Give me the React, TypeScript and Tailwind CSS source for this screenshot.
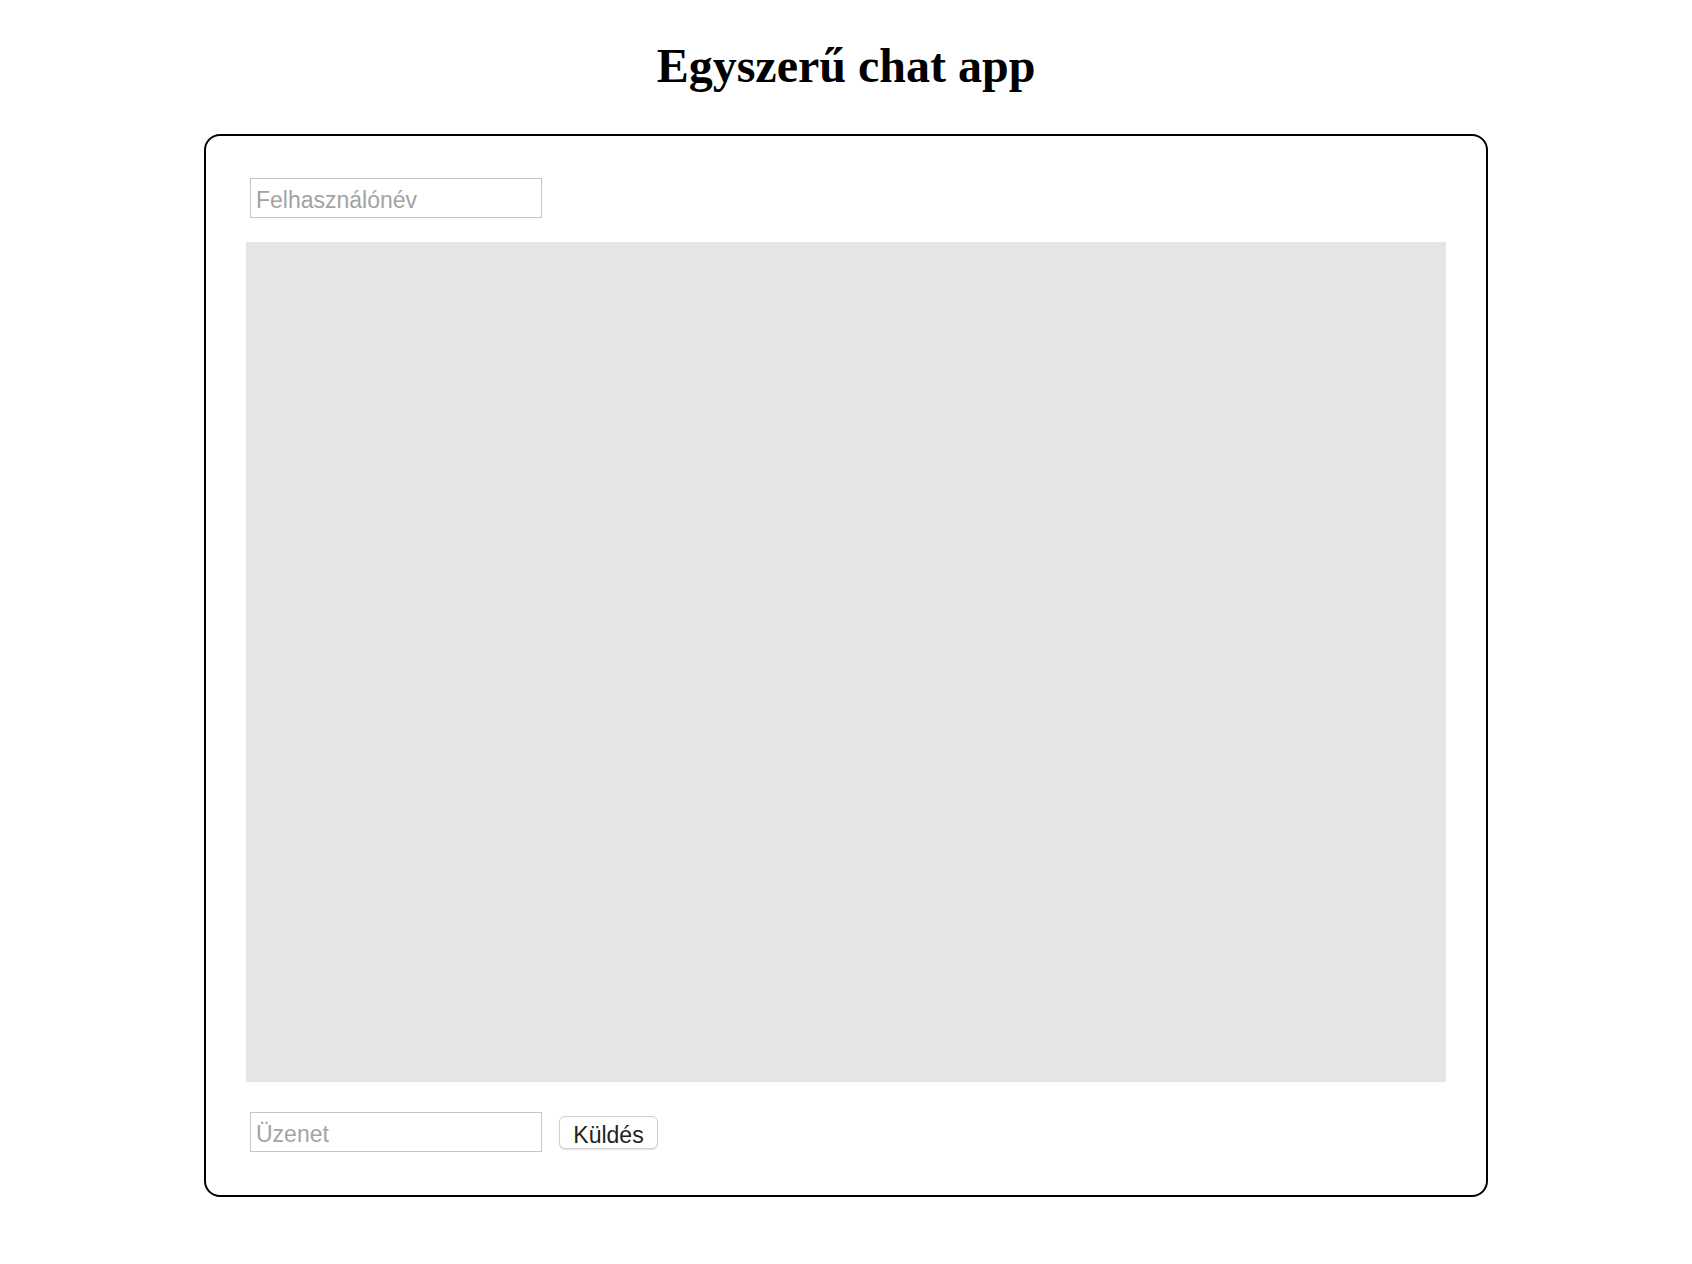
import React from "react";

const App = () => {
  return (
    <div className="min-h-screen bg-white">
      <h1 className="pt-[39px] text-center text-[48px] leading-[53px] font-bold text-black [font-family:'Liberation_Serif',serif]">
        Egyszerű chat app
      </h1>
      <div className="mx-auto mt-[42px] w-[1284px] rounded-2xl border-2 border-black px-10 pt-[42px] pb-[43px] [font-family:'Liberation_Sans',Arial,sans-serif]">
        <input
          type="text"
          placeholder="Felhasználónév"
          className="ml-1 block h-[40px] w-[292px] border border-[#c4c4c4] px-[5px] pt-[4px] text-[23px] text-black outline-none placeholder:text-[#a3a3a3]"
        />
        <div className="mt-6 h-[840px] w-[1200px] bg-[#e5e5e5]" />
        <div className="mt-[30px] flex items-center gap-[17px]">
          <input
            type="text"
            placeholder="Üzenet"
            className="ml-1 block h-[40px] w-[292px] border border-[#c4c4c4] px-[5px] pt-[4px] text-[23px] text-black outline-none placeholder:text-[#a3a3a3]"
          />
          <button className="h-[33px] w-[99px] rounded-[6px] border border-[#cfcfcf] bg-white pt-[1px] text-[23px] text-[#222] shadow-[0_1px_1px_rgba(0,0,0,0.12)]">
            Küldés
          </button>
        </div>
      </div>
    </div>
  );
};

export default App;
